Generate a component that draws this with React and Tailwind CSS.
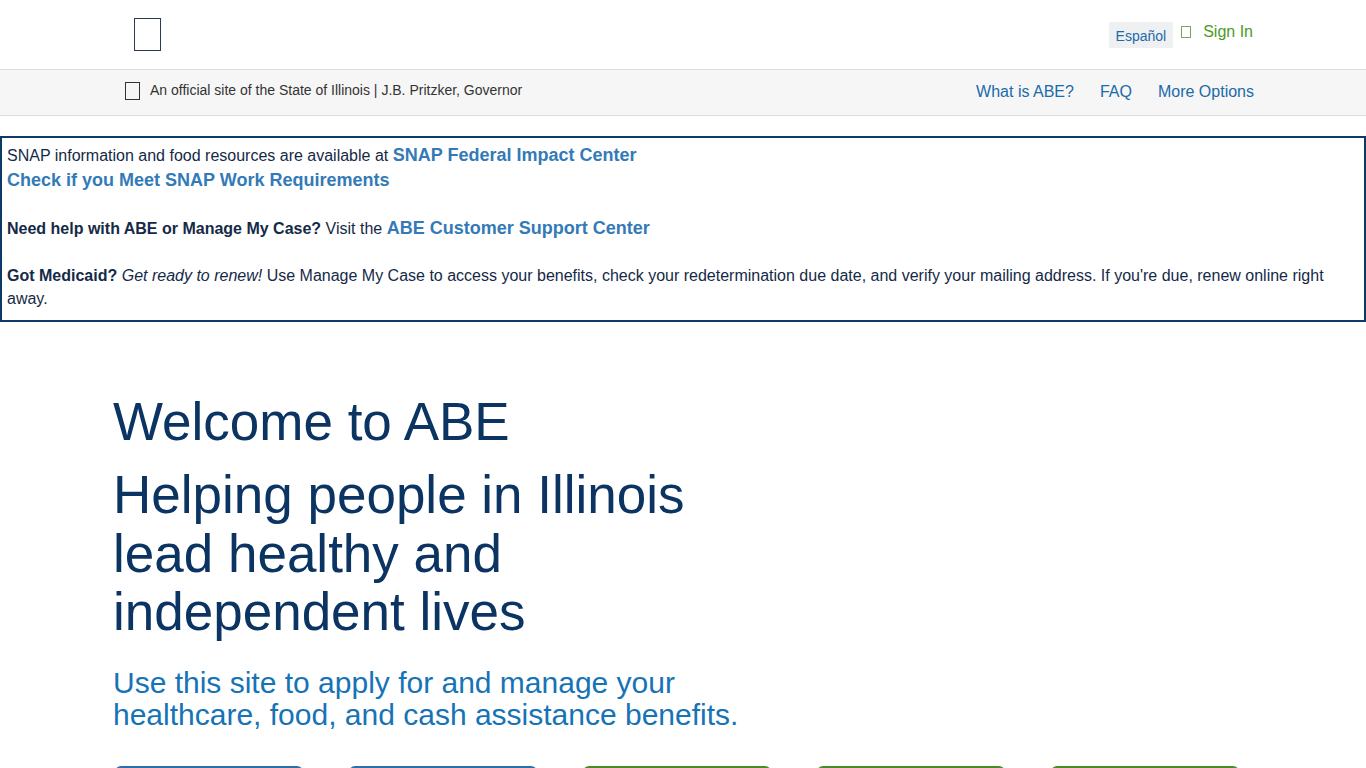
import React from 'react'

const font = { fontFamily: '"Liberation Sans", Arial, sans-serif' }

function Header() {
  return (
    <header>
      <div className="h-[70px] bg-white border-b border-[#dddddd]">
        <div className="w-[1170px] mx-auto px-[15px] flex items-start justify-between">
          <div className="ml-[21px] mt-[18px] w-[27px] h-[33px] border border-[#2d3b4e]" />
          <div className="flex items-start mt-[22px]">
            <button className="ml-[1px] h-[26px] px-[7px] bg-[#eff0f2] text-[14px] text-[#1d6aa8] leading-[26px] pt-[1px]">
              Español
            </button>
            <span className="ml-[8px] mt-[4px] w-[10px] h-[12px] border border-[#7aa65a]" />
            <a href="#" className="ml-[12px] mt-[1px] text-[16px] leading-[18px] text-[#4b9a23]">
              Sign In
            </a>
          </div>
        </div>
      </div>
      <div className="h-[46px] bg-[#f6f6f6] border-b border-[#dddddd]">
        <div className="w-[1170px] mx-auto px-[15px] flex items-start justify-between">
          <div className="flex items-center mt-[10px]">
            <span className="ml-[12px] w-[15px] h-[18px] border border-[#333333]" />
            <span className="ml-[10px] text-[14px] text-[#333333]">
              An official site of the State of Illinois | J.B. Pritzker, Governor
            </span>
          </div>
          <nav className="flex gap-[26px] mt-[10px] mr-[-1px] text-[16px] text-[#1b6aaa]">
            <a href="#">What is ABE?</a>
            <a href="#">FAQ</a>
            <a href="#">More Options</a>
          </nav>
        </div>
      </div>
    </header>
  )
}

function Alert() {
  const link = 'font-bold text-[18px] text-[#337ab7]'
  return (
    <div className="mt-[20px] border-2 border-[#0c3966] pt-[5px] pl-[5px] pr-[5px] pb-[10px] text-[16px] text-[#152a47]">
      <div className="leading-[25px]">
        SNAP information and food resources are available at{' '}
        <a href="#" className={link}>SNAP Federal Impact Center</a>
      </div>
      <div className="leading-[25px]">
        <a href="#" className={link}>Check if you Meet SNAP Work Requirements</a>
      </div>
      <div className="h-[23px]" />
      <div className="leading-[25px]">
        <b>Need help with ABE or Manage My Case?</b> Visit the{' '}
        <a href="#" className={link}>ABE Customer Support Center</a>
      </div>
      <div className="h-[23px]" />
      <div className="leading-[23px]">
        <b>Got Medicaid?</b> <i>Get ready to renew!</i> Use Manage My Case to access your benefits, check your
        redetermination due date, and verify your mailing address. If you're due, renew online right away.
      </div>
    </div>
  )
}

function Hero() {
  const buttons = [
    { label: 'Apply for Benefits', color: 'bg-[#2e6da6]' },
    { label: 'Check Eligibility', color: 'bg-[#2e6da6]' },
    { label: 'Manage My Case', color: 'bg-[#4b8a2b]' },
    { label: 'Renew Benefits', color: 'bg-[#4b8a2b]' },
    { label: 'Report Changes', color: 'bg-[#4b8a2b]' },
  ]
  return (
    <section className="w-[1170px] mx-auto px-[15px] pt-[71px]">
      <h1 className="text-[53px] leading-[58px] text-[#0b3463]">Welcome to ABE</h1>
      <h2 className="mt-[15px] w-[620px] text-[53px] leading-[58.5px] text-[#0b3463]">
        Helping people in Illinois lead healthy and independent lives
      </h2>
      <p className="mt-[25px] text-[30px] leading-[32.5px] text-[#1673b6]">
        Use this site to apply for and manage your
        <br />
        healthcare, food, and cash assistance benefits.
      </p>
      <div className="mt-[34px] flex gap-[46px] pl-[2px]">
        {buttons.map((b) => (
          <a
            key={b.label}
            href="#"
            className={`w-[188px] h-[56px] rounded-[6px] ${b.color} text-white text-[18px] font-bold flex items-center justify-center`}
          >
            {b.label}
          </a>
        ))}
      </div>
      <div className="h-[40px]" />
    </section>
  )
}

export default function App() {
  return (
    <div className="bg-white min-h-screen" style={font}>
      <Header />
      <Alert />
      <Hero />
    </div>
  )
}
